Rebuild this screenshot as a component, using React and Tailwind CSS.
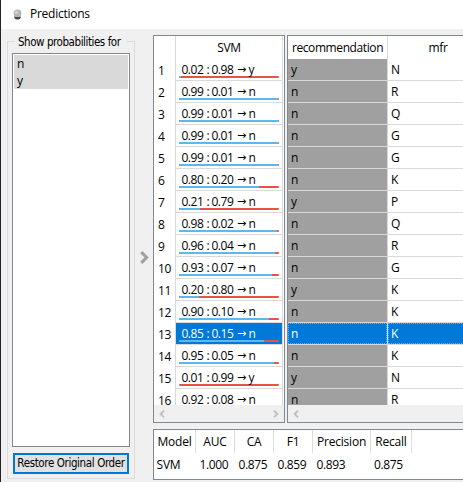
import React from 'react';

const rows = [
  ['0.02', '0.98', 'y', 'y', 'N'],
  ['0.99', '0.01', 'n', 'n', 'R'],
  ['0.99', '0.01', 'n', 'n', 'Q'],
  ['0.99', '0.01', 'n', 'n', 'G'],
  ['0.99', '0.01', 'n', 'n', 'G'],
  ['0.80', '0.20', 'n', 'n', 'K'],
  ['0.21', '0.79', 'n', 'y', 'P'],
  ['0.98', '0.02', 'n', 'n', 'Q'],
  ['0.96', '0.04', 'n', 'n', 'R'],
  ['0.93', '0.07', 'n', 'n', 'G'],
  ['0.20', '0.80', 'n', 'y', 'K'],
  ['0.90', '0.10', 'n', 'n', 'K'],
  ['0.85', '0.15', 'n', 'n', 'K'],
  ['0.95', '0.05', 'n', 'n', 'K'],
  ['0.01', '0.99', 'y', 'y', 'N'],
  ['0.92', '0.08', 'n', 'n', 'R'],
];
const SELECTED = 12;

function Chevron({ left, className }) {
  return (
    <svg viewBox="0 0 6 8" className={className} fill="none" stroke="currentColor" strokeWidth="1.9">
      <path d={left ? 'M5 0.7 L1.7 4 L5 7.3' : 'M1 0.7 L4.3 4 L1 7.3'} />
    </svg>
  );
}

function Bulb() {
  return (
    <svg viewBox="0 0 10 12" className="w-[9px] h-[11px]">
      <path d="M5 0.5 C2 0.5 .6 2.4 .6 4.7 C.6 7 2 7.9 2.2 9 L7.8 9 C8 7.9 9.4 7 9.4 4.7 C9.4 2.4 8 .5 5 .5Z" fill="#b5b5b5" />
      <circle cx="3.8" cy="3.6" r="1.8" fill="#d2d2d2" />
      <path d="M1.4 8.2 Q5 9.4 8.6 8.2 V9.6 C7.6 11.2 6.4 11.5 5 11.5 S2.4 11.2 1.4 9.6Z" fill="#4a4a4a" />
    </svg>
  );
}

function PredictionCell({ row, selected }) {
  return (
    <div className={`w-[106px] h-[22px] shrink-0 border-b border-[#d9d9d9] pl-[3px] ${selected ? 'bg-[#0078d7] text-white' : ''}`}>
      <div className="h-[17px] pl-[2.5px] leading-[22px] flex tracking-[-0.5px]">
        <span className="w-[24px]">{row[0]}</span>
        <span className="w-[6px] pl-px">:</span>
        <span className="w-[24px]">{row[1]}</span>
        <span className="w-[12px] flex justify-center font-['DejaVu_Sans'] text-[11px] tracking-normal">→</span>
        <span className="pl-px">{row[2]}</span>
      </div>
      <div className="flex w-[100px] h-[2px] rounded-full overflow-hidden bg-[#e65543]">
        <div className="h-full bg-[#5bb9ee]" style={{ width: `${Math.round(row[0] * 100)}px` }} />
      </div>
    </div>
  );
}

const metrics = [
  ['Model', 'SVM', 'w-[42px]', 'pl-[2.5px] tracking-[-0.2px]'],
  ['AUC', '1.000', 'w-[39px]', 'pl-[3.5px]'],
  ['CA', '0.875', 'w-[39px]', 'pl-[3.5px]'],
  ['F1', '0.859', 'w-[39px]', 'pl-[3.5px]'],
  ['Precision', '0.893', 'w-[58px]', 'pl-[3.5px]'],
  ['Recall', '0.875', 'w-[41px]', 'pl-[3px]'],
];

export default function App() {
  return (
    <div className="w-[463px] h-[482px] overflow-hidden bg-[#f0f0f0] border-l border-[#24222a] text-black font-['Open_Sans','Noto_Sans',sans-serif] text-[12px] tracking-[-0.4px] whitespace-nowrap">
      <div className="h-[29px] bg-white flex items-center pl-[12px] pb-px">
        <Bulb />
        <span className="ml-[8px] tracking-[-0.25px]">Predictions</span>
      </div>
      <div className="flex h-[453px]">
        <fieldset className="relative ml-[6px] mt-[12px] w-[128px] h-[438px] shrink-0 border border-[#dcdcdc] px-[4px] font-['DejaVu_Sans_Condensed','DejaVu_Sans',sans-serif] text-[11.5px] tracking-[-0.45px]">
          <span className="absolute left-[7px] top-[-7px] h-[14px] leading-[14px] w-[112px] pl-[3px] bg-[#f0f0f0]">Show probabilities for</span>
          <div className="mt-[11px] w-[118px] h-[394px] bg-white border border-[#828790] p-px font-['Open_Sans','Noto_Sans',sans-serif] text-[12px]">
            <div className="h-[17px] leading-[18px] pl-[3px] bg-[#d9d9d9]">n</div>
            <div className="h-[17px] leading-[17px] pl-[3px] bg-[#d9d9d9]">y</div>
          </div>
          <button className="flex justify-center ml-px mt-[6px] w-[116px] h-[21px] border-2 border-[#0078d7] bg-[#e1e1e1] leading-[17px] tracking-[-0.38px]">Restore Original Order</button>
        </fieldset>
        <div className="w-[18px] shrink-0 flex items-start justify-center pt-[222px]">
          <Chevron className="w-[11px] h-[13px] text-[#a0a0a0]" />
        </div>
        <div className="mt-[6px] w-[310px] shrink-0">
          <div className="flex gap-[2px]">
            <div className="w-[132px] h-[388px] shrink-0 border border-[#828790] bg-white">
              <div className="h-[369px] overflow-hidden">
                <div className="flex h-[23px]">
                  <div className="w-[22px] shrink-0 border-r border-[#d9d9d9]" />
                  <div className="w-[107px] shrink-0 border-r border-[#e3e3e3] text-center leading-[23px]">SVM</div>
                </div>
                {rows.map((r, i) => (
                  <div key={i} className="flex h-[22px]">
                    <div className="w-[22px] shrink-0 border-r border-[#d9d9d9] pl-[4px] leading-[23px]">{i + 1}</div>
                    <PredictionCell row={r} selected={i === SELECTED} />
                    <div className="w-px bg-[#d9d9d9]" />
                  </div>
                ))}
              </div>
              <div className="h-[17px] bg-[#f0f0f0] flex justify-between items-center px-[5px] text-[#bfbfbf]">
                <Chevron left className="w-[6px] h-[8px]" />
                <Chevron className="w-[6px] h-[8px]" />
              </div>
            </div>
            <div className="w-[180px] h-[388px] shrink-0 border border-r-0 border-[#828790] bg-white">
              <div className="h-[369px] overflow-hidden">
                <div className="flex h-[23px] leading-[23px]">
                  <div className="w-[100px] shrink-0 border-r border-[#d9d9d9] text-center">recommendation</div>
                  <div className="w-[100px] shrink-0 text-center">mfr</div>
                </div>
                {rows.map((r, i) => (
                  <div key={i} className="flex h-[22px]">
                    <div className={`w-[100px] shrink-0 border-r border-b border-[#d9d9d9] ${i === SELECTED ? 'bg-[#0078d7] text-white' : 'bg-[#a0a0a0]'}`}>
                      <div className={`h-[21px] pl-[2px] border border-dotted leading-[20px] ${i === SELECTED ? 'border-[#ff8728]' : 'border-transparent'}`}>{r[3]}</div>
                    </div>
                    <div className={`w-[100px] shrink-0 border-b border-[#d9d9d9] ${i === SELECTED ? 'bg-[#0078d7] text-white' : ''}`}>
                      <div className={`h-[21px] pl-[2px] border border-dotted leading-[20px] ${i === SELECTED ? 'border-[#ff8728]' : 'border-transparent'}`}>{r[4]}</div>
                    </div>
                  </div>
                ))}
              </div>
              <div className="h-[17px] bg-[#f0f0f0] flex items-center px-[5px] text-[#bfbfbf]">
                <Chevron left className="w-[6px] h-[8px]" />
              </div>
            </div>
          </div>
          <div className="mt-[6px] h-[51px] w-[315px] border border-[#828790] bg-white flex">
            {metrics.map(([name, value, w, pad]) => (
              <div key={name} className={`${w} shrink-0`}>
                <div className="h-[23px] leading-[23px] border-r border-[#dedede] flex justify-center tracking-[-0.2px]">{name}</div>
                <div className={`h-[24px] leading-[24px] ${pad}`}>{value}</div>
              </div>
            ))}
          </div>
        </div>
      </div>
    </div>
  );
}
